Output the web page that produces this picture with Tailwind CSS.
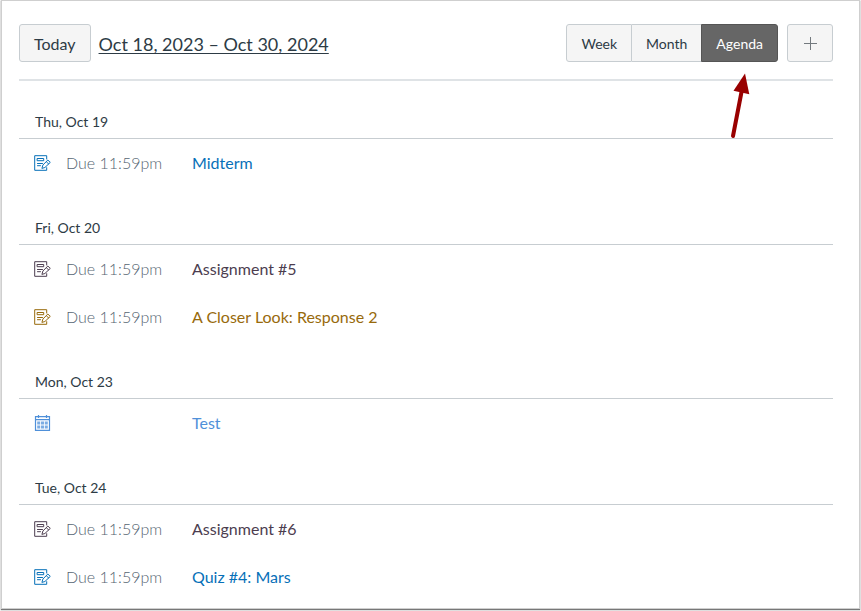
<!DOCTYPE html>
<html lang="en">
<head>
  <meta charset="UTF-8" />
  <meta name="viewport" content="width=device-width, initial-scale=1.0"/>
  <title>Calendar - Agenda</title>
  <script src="https://cdn.jsdelivr.net/npm/@tailwindcss/browser@4"></script>
</head>
<body class="bg-[#f4f4f4] pt-px px-0.5 pb-[3px] font-['Lato',sans-serif] text-[#2d3b45]">

  <!-- Icons shared by the rows -->
  <svg class="hidden">
    <symbol id="icon-assignment" viewBox="0 0 17 16">
      <g fill="none" stroke="currentColor" stroke-linejoin="round" stroke-linecap="round">
        <path d="M12.7 4V.7H.7v14.6h12v-2.6"/>
        <path d="M3.5 3.5h6.2v2.2H3.5z"/>
        <path d="M3.5 8.5h5M3.5 10.7h3"/>
        <path d="M14.1 5.3l2.2 2.1-5.4 5.1-3 .9.9-3z"/>
        <path d="M12.5 6.9l2.1 2"/>
      </g>
    </symbol>
    <symbol id="icon-calendar" viewBox="0 0 17 16">
      <path fill="none" stroke="currentColor" stroke-width="1.2" d="M1.5 1.6h14v13.8h-14zM1.5 4.6h14M4.5 0v3M12.5 0v3"/>
      <path fill="currentColor" fill-opacity="0.75" d="M3.2 6.6h3v2.8h-3zM7 6.6h3v2.8H7zM10.8 6.6h3v2.8h-3zM3.2 10.6h3v2.8h-3zM7 10.6h3v2.8H7zM10.8 10.6h3v2.8h-3z"/>
    </symbol>
  </svg>

  <div class="bg-white pt-[23px] pl-[17px] pr-[26px] pb-[7px] shadow-[0_0_0_1px_#cfcfcf,0_1px_1px_1px_#777777]">

    <!-- Toolbar -->
    <header class="flex items-center justify-between pb-[17px] border-b-2 border-[#dfe3e6]">
      <div class="flex items-center gap-2">
        <button class="h-[38px] px-3.5 pt-0.5 bg-[#f5f5f5] border border-[#c7cdd1] rounded-[3px] text-base">Today</button>
        <button class="pt-0.5 text-lg underline underline-offset-2">Oct 18, 2023 – Oct 30, 2024</button>
      </div>
      <div class="flex gap-[9px]">
        <div class="relative flex text-sm">
          <button class="h-[38px] px-3.5 pt-0.5 bg-[#f5f5f5] border border-[#c7cdd1] rounded-l-[3px]">Week</button>
          <button class="h-[38px] px-3.5 pt-0.5 bg-[#f5f5f5] border-y border-[#c7cdd1]">Month</button>
          <button class="h-[38px] px-3.5 pt-0.5 bg-[#666666] border border-[#555555] rounded-r-[3px] text-white">Agenda</button>
          <!-- Arrow pointing at the active view -->
          <svg class="absolute top-12 right-6 w-7 h-[68px] pointer-events-none" viewBox="0 0 28 68">
            <path d="M7 64L15.5 20" stroke="#990000" stroke-width="4" stroke-linecap="round"/>
            <path d="M19 1.5L23.3 22.2L7.5 18.8z" fill="#990000"/>
          </svg>
        </div>
        <button aria-label="Create new event" class="flex items-center justify-center w-[46px] h-[38px] bg-[#f5f5f5] border border-[#c7cdd1] rounded-[3px]">
          <svg class="w-[13px] h-[13px]" viewBox="0 0 13 13"><path d="M6.5 0v13M0 6.5h13" stroke="#73797e"/></svg>
        </button>
      </div>
    </header>

    <!-- Agenda -->
    <main>
      <section>
        <h2 class="pt-[29px] pb-1 pl-4 border-b border-[#c7cdd1] text-sm/6">Thu, Oct 19</h2>
        <ul>
          <li class="flex items-center h-12 pl-[15px] text-[#0770b8]">
            <svg class="w-[17px] h-4"><use href="#icon-assignment"/></svg>
            <span class="w-[126px] ml-[15px] font-light text-[#556572]">Due 11:59pm</span>
            <a href="#">Midterm</a>
          </li>
        </ul>
      </section>

      <section>
        <h2 class="pt-[29px] pb-1 pl-4 border-b border-[#c7cdd1] text-sm/6">Fri, Oct 20</h2>
        <ul>
          <li class="flex items-center h-12 pl-[15px] text-[#4c3d4f]">
            <svg class="w-[17px] h-4"><use href="#icon-assignment"/></svg>
            <span class="w-[126px] ml-[15px] font-light text-[#556572]">Due 11:59pm</span>
            <a href="#">Assignment #5</a>
          </li>
          <li class="flex items-center h-12 pl-[15px] text-[#986a0c]">
            <svg class="w-[17px] h-4"><use href="#icon-assignment"/></svg>
            <span class="w-[126px] ml-[15px] font-light text-[#556572]">Due 11:59pm</span>
            <a href="#">A Closer Look: Response 2</a>
          </li>
        </ul>
      </section>

      <section>
        <h2 class="pt-[29px] pb-1 pl-4 border-b border-[#c7cdd1] text-sm/6">Mon, Oct 23</h2>
        <ul>
          <li class="flex items-center h-12 pl-[15px] text-[#4f90d9]">
            <svg class="w-[17px] h-4"><use href="#icon-calendar"/></svg>
            <span class="w-[126px] ml-[15px]"></span>
            <a href="#">Test</a>
          </li>
        </ul>
      </section>

      <section>
        <h2 class="pt-[29px] pb-1 pl-4 border-b border-[#c7cdd1] text-sm/6">Tue, Oct 24</h2>
        <ul>
          <li class="flex items-center h-12 pl-[15px] text-[#4c3d4f]">
            <svg class="w-[17px] h-4"><use href="#icon-assignment"/></svg>
            <span class="w-[126px] ml-[15px] font-light text-[#556572]">Due 11:59pm</span>
            <a href="#">Assignment #6</a>
          </li>
          <li class="flex items-center h-12 pl-[15px] text-[#0770b8]">
            <svg class="w-[17px] h-4"><use href="#icon-assignment"/></svg>
            <span class="w-[126px] ml-[15px] font-light text-[#556572]">Due 11:59pm</span>
            <a href="#">Quiz #4: Mars</a>
          </li>
        </ul>
      </section>
    </main>
  </div>

</body>
</html>
